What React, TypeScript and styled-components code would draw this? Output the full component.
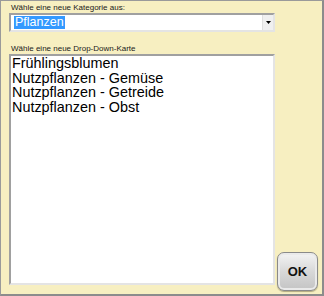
import React from 'react';
import styled, { createGlobalStyle } from 'styled-components';

const Global = createGlobalStyle`
  html, body {
    margin: 0;
    padding: 0;
    background: #f7efc1;
  }
  body {
    font-family: "Liberation Sans", Arial, sans-serif;
  }
`;

const Window = styled.div`
  box-sizing: border-box;
  width: 324px;
  height: 296px;
  background: #f7efc1;
  border: 1px solid #9a9a9a;
  border-right: 2px solid #8c8c8c;
  border-bottom: 2px solid #8c8c8c;
  padding: 2px 0 3px 8px;
  display: flex;
  flex-direction: column;
`;

const Label = styled.div`
  font-size: 8px;
  color: #1a1a1a;
  height: 10px;
  line-height: 10px;
  padding-left: 2px;
`;

const Select = styled.div`
  box-sizing: border-box;
  width: 266px;
  height: 19px;
  background: #fff;
  border: 2px solid #a0a0a0;
  border-right-color: #e4e4e4;
  border-bottom-color: #e4e4e4;
  display: flex;
  align-items: center;
  padding-left: 3px;
`;

const Selected = styled.span`
  background: #3399ff;
  color: #fff;
  font-size: 12.5px;
  line-height: 13px;
  padding: 0 1px;
`;

const ArrowButton = styled.div`
  margin-left: auto;
  width: 11px;
  height: 15px;
  box-sizing: border-box;
  background: #f0f0f0;
  border-left: 1px solid #e0e0e0;
  display: flex;
  align-items: center;
  justify-content: center;
`;

const Gap = styled.div<{ h: number }>`
  height: ${p => p.h}px;
`;

const ListBox = styled.div`
  box-sizing: border-box;
  width: 266px;
  height: 231px;
  margin-bottom: 6px;
  background: #fff;
  border: 2px solid #a0a0a0;
  border-right-color: #e4e4e4;
  border-bottom-color: #e4e4e4;
  padding: 0 0 0 1px;
`;

const Item = styled.div`
  font-size: 14.4px;
  line-height: 14.5px;
  color: #000;
`;

const Bottom = styled.div`
  display: flex;
  align-items: flex-end;
`;

const OkButton = styled.div`
  box-sizing: border-box;
  width: 41px;
  height: 39px;
  margin-left: 2px;
  border-radius: 7px;
  border: 1px solid #8a8a8a;
  background: linear-gradient(#f4f4f4, #d8d8d8 50%, #c4c4c4);
  box-shadow: inset 0 0 0 2px #eaeaea, 0 1px 1px #b0a880;
  display: flex;
  align-items: center;
  justify-content: center;
  font-weight: bold;
  font-size: 13px;
  color: #111;
`;

const items = [
  'Frühlingsblumen',
  'Nutzpflanzen - Gemüse',
  'Nutzpflanzen - Getreide',
  'Nutzpflanzen - Obst',
];

const App = () => {
  return (
    <>
      <Global />
      <Window>
        <Label>Wähle eine neue Kategorie aus:</Label>
        <Select>
          <Selected>Pflanzen</Selected>
          <ArrowButton>
            <svg width="5" height="3" viewBox="0 0 5 3">
              <polygon points="0,0 5,0 2.5,3" fill="#000" />
            </svg>
          </ArrowButton>
        </Select>
        <Gap h={12} />
        <Label>Wähle eine neue Drop-Down-Karte</Label>
        <Bottom>
          <ListBox>
            {items.map((item, i) => (
              <Item key={i}>{item}</Item>
            ))}
          </ListBox>
          <OkButton>OK</OkButton>
        </Bottom>
      </Window>
    </>
  );
};

export default App;
